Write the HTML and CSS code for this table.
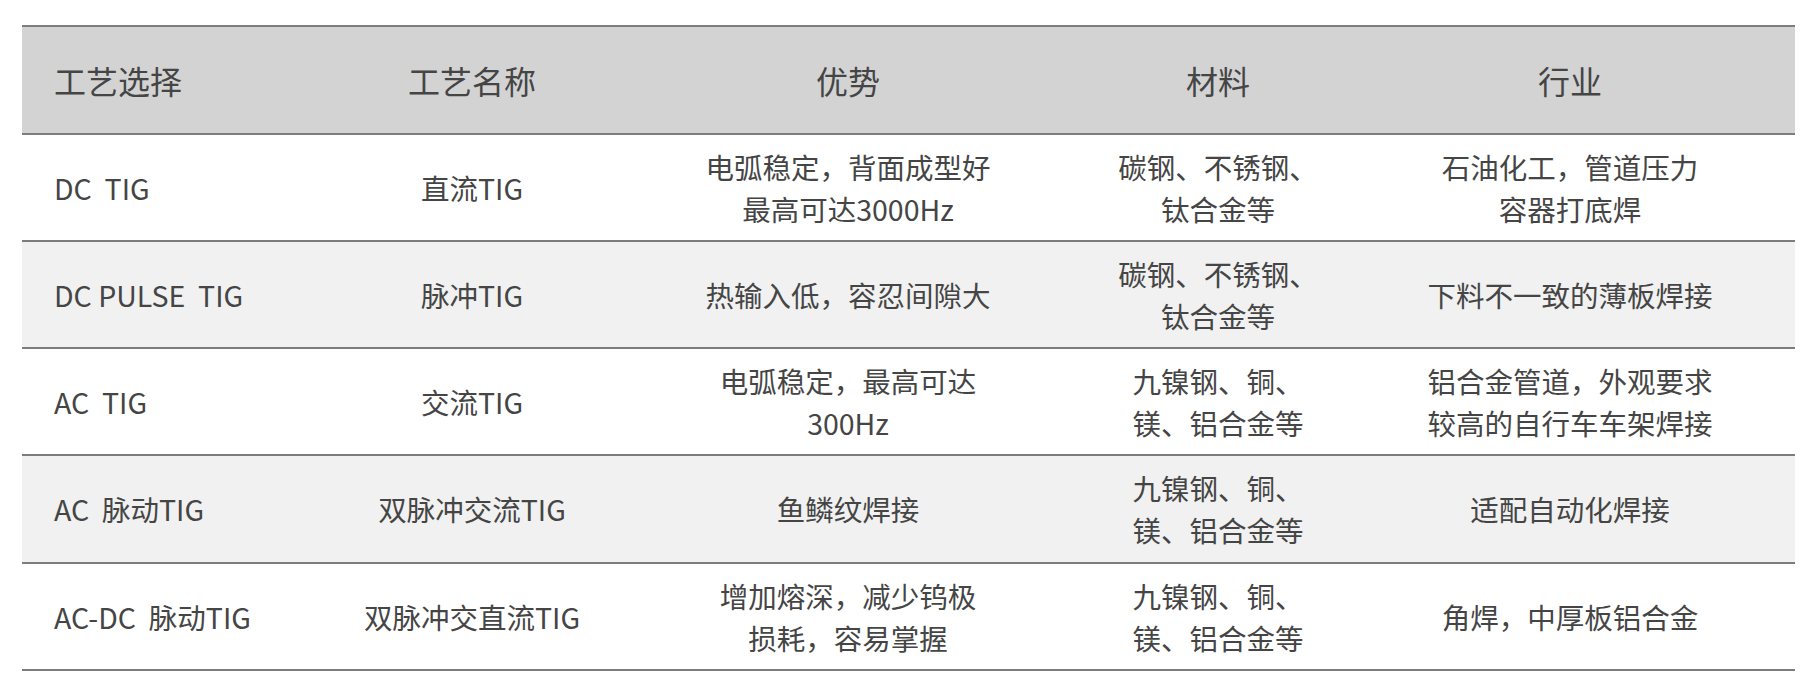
FILE: index.html
```html
<!DOCTYPE html>
<html lang="zh-CN">
<head>
<meta charset="utf-8">
<title>工艺选择</title>
<link rel="stylesheet" href="styles.css">
</head>
<body>
<div class="wrap">
  <div class="tbl">
    <div class="row head">
      <div class="cell first">工艺选择</div>
      <div class="cell">工艺名称</div>
      <div class="cell">优势</div>
      <div class="cell">材料</div>
      <div class="cell">行业</div>
    </div>
    <div class="row">
      <div class="cell first">DC&nbsp;&nbsp;TIG</div>
      <div class="cell">直流TIG</div>
      <div class="cell">电弧稳定，背面成型好<br>最高可达3000Hz</div>
      <div class="cell">碳钢、不锈钢、<br>钛合金等</div>
      <div class="cell">石油化工，管道压力<br>容器打底焊</div>
    </div>
    <div class="row alt">
      <div class="cell first">DC PULSE&nbsp;&nbsp;TIG</div>
      <div class="cell">脉冲TIG</div>
      <div class="cell">热输入低，容忍间隙大</div>
      <div class="cell">碳钢、不锈钢、<br>钛合金等</div>
      <div class="cell">下料不一致的薄板焊接</div>
    </div>
    <div class="row">
      <div class="cell first">AC&nbsp;&nbsp;TIG</div>
      <div class="cell">交流TIG</div>
      <div class="cell">电弧稳定，最高可达<br>300Hz</div>
      <div class="cell">九镍钢、铜、<br>镁、铝合金等</div>
      <div class="cell">铝合金管道，外观要求<br>较高的自行车车架焊接</div>
    </div>
    <div class="row alt tall">
      <div class="cell first">AC&nbsp;&nbsp;脉动TIG</div>
      <div class="cell">双脉冲交流TIG</div>
      <div class="cell">鱼鳞纹焊接</div>
      <div class="cell">九镍钢、铜、<br>镁、铝合金等</div>
      <div class="cell">适配自动化焊接</div>
    </div>
    <div class="row">
      <div class="cell first">AC-DC&nbsp;&nbsp;脉动TIG</div>
      <div class="cell">双脉冲交直流TIG</div>
      <div class="cell">增加熔深，减少钨极<br>损耗，容易掌握</div>
      <div class="cell">九镍钢、铜、<br>镁、铝合金等</div>
      <div class="cell">角焊，中厚板铝合金</div>
    </div>
  </div>
</div>
</body>
</html>
```

FILE: styles.css
```css
html, body {
  margin: 0;
  padding: 0;
  background: #ffffff;
}

body {
  font-family: "Noto Sans CJK SC", "Noto Sans", sans-serif;
  color: #454545;
}

.wrap {
  padding: 25px 23px 0 22px;
}

.tbl {
  width: 1773px;
}

.row {
  display: grid;
  grid-template-columns: 317px 266px 486px 254px 450px;
  align-items: center;
  height: 105px;
  border-bottom: 2px solid #7c7c7c;
  font-size: 28.5px;
  line-height: 42px;
}

.row.tall {
  height: 106px;
}

.row.head {
  height: 106px;
  border-top: 2px solid #7c7c7c;
  background: #d3d3d3;
  font-size: 32px;
  line-height: 44px;
}

.row.alt {
  background: #f0f1f0;
}

.cell {
  text-align: center;
  white-space: nowrap;
}

.cell.first {
  text-align: left;
  padding-left: 32px;
}
```
